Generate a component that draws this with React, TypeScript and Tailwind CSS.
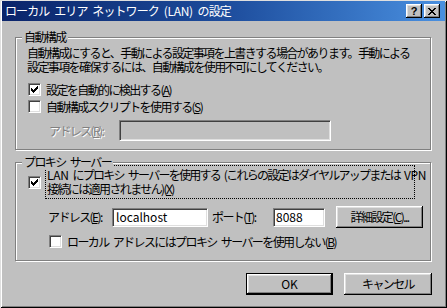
import React from 'react';

const FONT = { fontFamily: '"Noto Sans CJK JP", "Liberation Sans", sans-serif' };

// 3D borders of the classic Windows look
const raised =
  'bg-[#c0c0c0] shadow-[inset_-1px_-1px_0_#000,inset_1px_1px_0_#fff,inset_-2px_-2px_0_#808080,inset_2px_2px_0_#dfdfdf]';
const sunken =
  'border border-t-[#808080] border-l-[#808080] border-r-white border-b-white shadow-[inset_1px_1px_0_#404040,inset_-1px_-1px_0_#dfdfdf]';
const etched = 'border border-[#808080] shadow-[inset_1px_1px_0_#fff,1px_1px_0_#fff]';

function Check({ checked }: { checked?: boolean }) {
  return (
    <span className={`w-[13px] h-[13px] shrink-0 bg-white flex items-center justify-center ${sunken}`}>
      {checked && (
        <svg width="7" height="7" viewBox="0 0 7 7" shapeRendering="crispEdges">
          <rect x="6" y="0" width="1" height="3" fill="#000" />
          <rect x="5" y="1" width="1" height="3" fill="#000" />
          <rect x="4" y="2" width="1" height="3" fill="#000" />
          <rect x="3" y="3" width="1" height="3" fill="#000" />
          <rect x="2" y="4" width="1" height="3" fill="#000" />
          <rect x="1" y="3" width="1" height="3" fill="#000" />
          <rect x="0" y="2" width="1" height="3" fill="#000" />
        </svg>
      )}
    </span>
  );
}

function Latin({ children }: { children: React.ReactNode }) {
  return <span className="tracking-[-0.3px]">{children}</span>;
}

function Group({ title, className, children }: { title: string; className: string; children: React.ReactNode }) {
  return (
    <div className={`relative w-[416px] ${etched} ${className}`}>
      <span className="absolute left-[6px] top-[-8px] px-[2px] bg-[#c0c0c0] leading-[14px]">{title}</span>
      {children}
    </div>
  );
}

export default function App() {
  return (
    <div
      style={FONT}
      className="relative w-[447px] h-[308px] bg-[#c0c0c0] text-[12px] leading-[14px] tracking-[-1.6px] [word-spacing:3px] whitespace-nowrap text-black shadow-[inset_1px_1px_0_#dfdfdf,inset_-1px_-1px_0_#000,inset_2px_2px_0_#fff,inset_-2px_-2px_0_#808080] overflow-hidden"
    >
      {/* タイトルバー */}
      <div className="mx-[2px] mt-[1px] h-[20px] flex items-center justify-between pl-[3px] pr-[5px] bg-gradient-to-r from-[#0a246a] via-[#1d4c9c] to-[#4a90e0]">
        <span className="text-white text-[12px] tracking-[-0.9px]">
          ローカル エリア ネットワーク <Latin>(LAN)</Latin> の設定
        </span>
        <div className="flex gap-[1px]">
          <span className={`w-[16px] h-[14px] flex items-center justify-center ${raised}`}>
            <span className="text-[11px] font-bold leading-none tracking-normal" style={{ fontFamily: '"Liberation Sans", sans-serif' }}>?</span>
          </span>
          <span className={`w-[16px] h-[14px] flex items-center justify-center ml-[1px] ${raised}`}>
            <svg width="8" height="7" viewBox="0 0 8 7" shapeRendering="crispEdges">
              <path d="M0 0h2v1h-2zM6 0h2v1h-2zM1 1h2v1h-2zM5 1h2v1h-2zM2 2h4v1h-4zM3 3h2v1h-2zM2 4h4v1h-4zM1 5h2v1h-2zM5 5h2v1h-2zM0 6h2v1h-2zM6 6h2v1h-2z" fill="#000" />
            </svg>
          </span>
        </div>
      </div>

      <div className="px-[15px]">
        {/* 自動構成 */}
        <Group title="自動構成" className="mt-[16px] h-[113px] pl-[11px] pt-[8px]">
          <p>自動構成にすると、手動による設定事項を上書きする場合があります。手動による</p>
          <p>設定事項を確保するには、自動構成を使用不可にしてください。</p>
          <label className="mt-[9px] ml-[1px] h-[13px] flex items-center gap-[5px]">
            <Check checked />
            <span>設定を自動的に検出する(<u>A</u>)</span>
          </label>
          <label className="mt-[4px] ml-[1px] h-[13px] flex items-center gap-[5px]">
            <Check />
            <span>自動構成スクリプトを使用する(<u>S</u>)</span>
          </label>
          <div className="mt-[7px] flex items-center">
            <span className="ml-[22px] w-[70px] text-[#808080] [text-shadow:1px_1px_0_#fff]">
              アドレス(<u>R</u>):
            </span>
            <span className={`w-[212px] h-[21px] bg-[#c0c0c0] ${sunken}`} />
          </div>
        </Group>

        {/* プロキシ サーバー */}
        <Group title="プロキシ サーバー" className="mt-[12px] h-[99px] pl-[12px] pt-[2px]">
          <div className="flex items-center">
            <Check checked />
            <div className="ml-[4px] w-[370px] border border-dotted border-black pl-[1px] py-[2px]">
              <p className="tracking-[-1.75px]">
                <Latin>LAN</Latin> にプロキシ サーバーを使用する (これらの設定はダイヤルアップまたは <Latin>VPN</Latin>
              </p>
              <p>接続には適用されません)(<u>X</u>)</p>
            </div>
          </div>
          <div className="mt-[7px] flex items-center h-[22px]">
            <span className="ml-[20px] w-[64px]">アドレス(<u>E</u>):</span>
            <span className={`w-[96px] h-[19px] bg-white flex items-center pl-[3px] tracking-normal ${sunken}`}>localhost</span>
            <span className="ml-[4px] w-[61px]">ポート(<u>T</u>):</span>
            <span className={`w-[52px] h-[19px] bg-white flex items-center pl-[2px] tracking-normal ${sunken}`}>8088</span>
            <button className={`ml-[11px] w-[87px] h-[22px] flex items-center justify-center ${raised}`}>
              詳細設定(<u>C</u>)...
            </button>
          </div>
          <label className="mt-[7px] ml-[21px] h-[13px] flex items-center gap-[5px]">
            <Check />
            <span>ローカル アドレスにはプロキシ サーバーを使用しない(<u>B</u>)</span>
          </label>
        </Group>

        <div className="mt-[12px] flex justify-end gap-[11px]">
          <button className={`w-[87px] h-[22px] flex items-center justify-center border border-black tracking-normal ${raised}`}>
            OK
          </button>
          <button className={`w-[88px] h-[22px] flex items-center justify-center ${raised}`}>キャンセル</button>
        </div>
      </div>
    </div>
  );
}
